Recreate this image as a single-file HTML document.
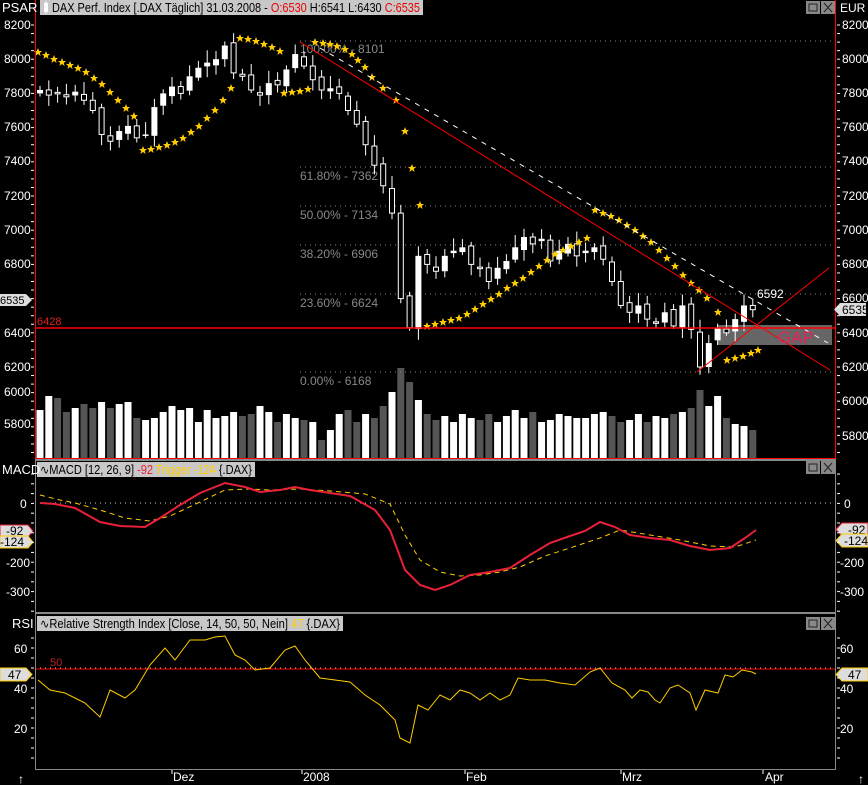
<!DOCTYPE html>
<html><head><meta charset="utf-8"><style>
html,body{margin:0;padding:0;background:#000;}
svg{display:block;font-family:"Liberation Sans",sans-serif;}
</style></head><body>
<svg id="s" width="868" height="785" viewBox="0 0 868 785" xmlns="http://www.w3.org/2000/svg">
<rect width="868" height="785" fill="#000"/>
<g id="vol"></g>
<g stroke="#888" stroke-dasharray="1,4" stroke-width="1">
<line x1="300" y1="41" x2="835" y2="41"/>
<line x1="300" y1="167" x2="835" y2="167"/>
<line x1="300" y1="206" x2="835" y2="206"/>
<line x1="300" y1="245" x2="835" y2="245"/>
<line x1="300" y1="294" x2="835" y2="294"/>
<line x1="300" y1="372" x2="835" y2="372"/>
<line x1="40" y1="668" x2="835" y2="668" stroke="#ccc"/>
<line x1="40" y1="503" x2="835" y2="503" stroke="#ccc"/>
</g>
<g fill="#888" font-size="12">
<text x="300" y="53">100.00% - 8101</text>
<text x="300" y="180">61.80% - 7362</text>
<text x="300" y="219">50.00% - 7134</text>
<text x="300" y="258">38.20% - 6906</text>
<text x="300" y="307">23.60% - 6624</text>
<text x="300" y="385">0.00% - 6168</text>
</g>
<rect x="718" y="325" width="114" height="20" fill="#666"/>
<g id="cdl"></g>
<g id="stars" fill="#ffcc00"></g>
<line x1="35" y1="328" x2="835" y2="328" stroke="#f00" stroke-width="1.5"/>
<text x="37" y="325" fill="#e02020" font-size="11">6428</text>
<line x1="300" y1="42" x2="830" y2="370" stroke="#f00" stroke-width="1"/>
<line x1="697" y1="372" x2="829" y2="268" stroke="#f00" stroke-width="1"/>
<line x1="320" y1="48" x2="828" y2="343" stroke="#fff" stroke-dasharray="5,6" stroke-width="1"/>
<text x="778" y="343" fill="#e8205a" font-size="17">GAP</text>
<text x="757" y="298" fill="#fff" font-size="12">6592</text>
<line x1="35.5" y1="0" x2="35.5" y2="458" stroke="#f00"/>
<line x1="835.5" y1="0" x2="835.5" y2="458" stroke="#f00"/>
<line x1="35" y1="458.5" x2="836" y2="458.5" stroke="#f00"/>
<rect x="35" y="459" width="801" height="2" fill="#888"/>
<rect x="35" y="612" width="801" height="2" fill="#888"/>
<rect x="35" y="769" width="801" height="1" fill="#888"/>
<line x1="35.5" y1="461" x2="35.5" y2="770" stroke="#888"/>
<line x1="835.5" y1="461" x2="835.5" y2="770" stroke="#888"/>
<polyline fill="none" stroke="#ffcc00" stroke-width="1" stroke-dasharray="5,4" points="40,495 60,500 75,503 100,510 125,518 150,521 170,516 200,502 225,490 250,489 270,490 300,489 330,491 365,494 390,504 405,535 420,560 440,572 460,576 480,575 500,572 520,567 545,556 570,548 600,538 620,530 650,535 680,540 710,546 735,547 756,540"/>
<polyline fill="none" stroke="#e8203a" stroke-width="2" points="40,503 55,504 75,508 100,522 120,526 145,527 160,518 180,505 200,493 225,483 245,487 260,492 280,490 295,487 310,490 330,493 350,496 375,510 390,530 405,570 420,585 435,590 450,585 470,575 490,572 510,568 530,555 550,543 570,536 585,531 600,522 615,527 630,535 650,538 670,540 690,546 710,550 730,548 745,538 756,530"/>
<line x1="36" y1="669" x2="835" y2="669" stroke="#f00"/>
<text x="50" y="666" fill="#c02020" font-size="11">50</text>
<polyline fill="none" stroke="#ffcc00" stroke-width="1" points="38,680 50,690 65,693 85,703 100,717 110,690 125,698 135,690 150,665 165,648 175,660 190,640 205,640 215,637 225,636 235,655 245,660 255,670 270,668 285,650 295,646 305,660 320,678 335,680 350,682 365,695 380,705 395,720 400,738 410,743 418,705 428,710 440,695 450,700 460,690 470,693 480,700 490,693 500,700 510,695 518,678 530,680 545,680 560,683 575,685 590,672 600,668 612,683 625,690 632,698 640,690 648,692 655,700 660,703 670,688 678,685 690,693 696,710 705,690 718,693 725,675 733,677 742,670 752,672 756,674"/>
<rect x="40" y="0" width="383" height="15" fill="#c8c8c8"/>
<rect x="44" y="3" width="4" height="9" fill="#fff"/><line x1="46" y1="1" x2="46" y2="14" stroke="#fff"/>
<text x="52" y="12" font-size="12.5" fill="#000" textLength="368" lengthAdjust="spacingAndGlyphs">DAX Perf. Index [.DAX  Täglich] 31.03.2008 - <tspan fill="#e00">O:6530</tspan> H:6541 L:6430 <tspan fill="#e00">C:6535</tspan></text>
<text x="2" y="12" fill="#fff" font-size="13">PSAR</text>
<rect x="37" y="462" width="218" height="15" fill="#c8c8c8"/>
<text x="40" y="474" font-size="12.5" fill="#000" textLength="212" lengthAdjust="spacingAndGlyphs">∿MACD [12, 26, 9] <tspan fill="#e8203a">-92</tspan> <tspan fill="#ffcc00">Trigger -124</tspan> {.DAX}</text>
<text x="2" y="474" fill="#fff" font-size="13">MACD</text>
<rect x="37" y="616" width="306" height="15" fill="#c8c8c8"/>
<text x="40" y="628" font-size="12.5" fill="#000" textLength="300" lengthAdjust="spacingAndGlyphs">∿Relative Strength Index [Close, 14, 50, 50, Nein] <tspan fill="#ffcc00">47</tspan> {.DAX}</text>
<text x="12" y="628" fill="#fff" font-size="13">RSI</text>
<g id="btns"></g>
<g fill="#fff" font-size="12">
<text x="840" y="12">EUR</text>
<text x="842" y="29">8200</text><text x="842" y="63">8000</text><text x="842" y="97">7800</text>
<text x="842" y="131">7600</text><text x="842" y="165">7400</text><text x="842" y="200">7200</text>
<text x="842" y="234">7000</text><text x="842" y="268">6800</text><text x="842" y="302">6600</text>
<text x="842" y="337">6400</text><text x="842" y="371">6200</text>
<text x="842" y="405">6000</text><text x="842" y="440">5800</text>
<text x="4" y="29">8200</text><text x="4" y="63">8000</text><text x="4" y="97">7800</text>
<text x="4" y="131">7600</text><text x="4" y="165">7400</text><text x="4" y="200">7200</text>
<text x="4" y="234">7000</text><text x="4" y="268">6800</text><text x="4" y="337">6400</text><text x="4" y="371">6200</text>
<text x="4" y="396">6000</text><text x="4" y="428">5800</text>
<text x="844" y="508">0</text><text x="840" y="567">-200</text><text x="840" y="596">-300</text>
<text x="20" y="508">0</text><text x="6" y="567">-200</text><text x="6" y="596">-300</text>
<text x="840" y="653">60</text><text x="840" y="733">20</text>
<text x="14" y="653">60</text><text x="14" y="693">40</text><text x="14" y="733">20</text>
<text x="840" y="693">40</text>
</g>
<path d="M840,303 L866,303 L866,316 L840,316 L834,309.5 Z" fill="#ddd"/>
<text x="842" y="314" font-size="12" fill="#000">6535</text>
<path d="M0,294 L26,294 L32,300 L26,306 L0,306Z" fill="#ddd"/>
<text x="0" y="304" font-size="11" fill="#000">6535</text>
<path d="M842,523 L868,523 L868,536 L842,536 L836,529.5 Z" fill="#ddd" stroke="#e8203a"/>
<text x="848" y="534" font-size="12" fill="#000">-92</text>
<path d="M842,534 L868,534 L868,547 L842,547 L836,540.5 Z" fill="#ddd" stroke="#ffcc00"/>
<text x="844" y="545" font-size="12" fill="#000">-124</text>
<path d="M0,525 L28,525 L33,531 L28,537 L0,537Z" fill="#ddd" stroke="#e8203a"/>
<text x="6" y="535" font-size="12" fill="#000">-92</text>
<path d="M0,536 L28,536 L33,542 L28,548 L0,548Z" fill="#ddd" stroke="#ffcc00"/>
<text x="0" y="546" font-size="12" fill="#000">-124</text>
<path d="M842,668 L868,668 L868,681 L842,681 L836,674.5 Z" fill="#ddd" stroke="#ffcc00"/>
<text x="848" y="679" font-size="12" fill="#000">47</text>
<path d="M0,668 L26,668 L32,674.5 L26,681 L0,681Z" fill="#ddd" stroke="#ffcc00"/>
<text x="8" y="679" font-size="12" fill="#000">47</text>
<g fill="#fff" font-size="12">
<text x="173" y="781">Dez</text><text x="303" y="781">2008</text><text x="466" y="781">Feb</text>
<text x="622" y="781">Mrz</text><text x="765" y="781">Apr</text>
<text x="18" y="783">↑</text><text x="858" y="783">↑</text>
</g>
<g stroke="#fff"><line x1="172" y1="770" x2="172" y2="774"/><line x1="302" y1="770" x2="302" y2="774"/><line x1="465" y1="770" x2="465" y2="774"/><line x1="621" y1="770" x2="621" y2="774"/><line x1="763" y1="770" x2="763" y2="774"/></g>
<g id="ticks" stroke="#fff"></g>
</svg>
<script>
var NS="http://www.w3.org/2000/svg";
function el(p,t,a){var e=document.createElementNS(NS,t);for(var k in a)e.setAttribute(k,a[k]);document.getElementById(p).appendChild(e);return e;}
function Y(p){return 25+(8200-p)/200*34.2;}
var c=[7820,7790,7800,7780,7810,7760,7700,7560,7520,7580,7610,7540,7560,7720,7800,7840,7800,7900,7950,7980,8000,8080,7920,7900,7820,7790,7860,7850,7940,8030,7960,7880,7820,7830,7800,7700,7620,7500,7380,7260,7100,6600,6430,6850,6800,6760,6850,6880,6900,6800,6780,6700,6780,6820,6900,6960,6920,6950,6820,6880,6920,6850,6880,6900,6830,6700,6560,6520,6560,6480,6460,6520,6440,6560,6420,6200,6340,6430,6400,6480,6560,6535];
var vol=[48,62,60,46,50,54,50,56,50,54,56,40,38,40,46,52,48,50,36,48,40,42,46,42,44,52,46,36,44,40,38,36,18,28,44,48,36,44,40,52,66,90,76,58,44,38,42,36,44,40,38,44,36,42,48,40,46,36,38,44,42,40,40,44,46,42,36,38,44,36,42,40,44,46,50,68,52,62,40,34,32,28];
for(var i=0;i<c.length;i++){
 var x=40+i*8.8, cl=c[i], op=i?c[i-1]+((i*37)%5-2)*8:7800;
 var r=(i*53%7)+3, hi=Math.max(op,cl)+r*8, lo=Math.min(op,cl)-((i*29%6)+2)*9;
 el("cdl","line",{x1:x,y1:Y(hi),x2:x,y2:Y(lo),stroke:"#fff"});
 var t=Math.min(Y(op),Y(cl)),h=Math.max(1.5,Math.abs(Y(op)-Y(cl)));
 if(cl>=op) el("cdl","rect",{x:x-3,y:t,width:6,height:h,fill:"#fff"});
 else el("cdl","rect",{x:x-2.5,y:t,width:5,height:h,fill:"#000",stroke:"#fff"});
 var v=vol[i]||40;
 el("vol","rect",{x:x-3.5,y:458-v,width:7,height:v,fill:(i%3==1?"#fff":(cl>=op?"#fff":"#555"))});
}
var st=[[38,52],[46,55],[54,59],[62,62],[70,65],[78,68],[86,72],[94,78],[102,84],[110,92],[118,100],[126,108],[134,116],[143,150],[151,149],[159,147],[167,145],[175,142],[183,138],[191,132],[199,126],[207,118],[215,110],[223,100],[231,88],[240,38],[248,39],[256,41],[264,44],[272,47],[280,51],[284,93],[292,92],[300,91],[308,89],[315,42],[323,43],[330,44],[337,46],[345,49],[352,54],[358,60],[365,67],[372,77],[383,88],[396,100],[405,131],[412,168],[420,205],[427,326],[435,324],[443,322],[451,320],[459,318],[467,314],[475,309],[483,304],[491,299],[499,294],[507,288],[515,283],[523,278],[531,272],[539,266],[547,260],[555,254],[563,250],[571,246],[579,242],[587,238],[595,210],[603,213],[611,216],[619,220],[627,225],[635,230],[643,236],[651,242],[659,250],[667,258],[675,266],[683,275],[691,283],[699,290],[707,298],[718,312],[727,360],[735,358],[743,356],[751,353],[758,350]];
st.forEach(function(p){var x=p[0],y=p[1];
 el("stars","path",{d:"M"+x+","+(y-4)+"L"+(x+1.2)+","+(y-1)+"L"+(x+4)+","+(y-1)+"L"+(x+1.8)+","+(y+1)+"L"+(x+2.6)+","+(y+4)+"L"+x+","+(y+2)+"L"+(x-2.6)+","+(y+4)+"L"+(x-1.8)+","+(y+1)+"L"+(x-4)+","+(y-1)+"L"+(x-1.2)+","+(y-1)+"Z"});});
[[1],[461],[617]].forEach(function(a){var y=a[0];
 el("btns","rect",{x:806,y:y,width:14,height:13,fill:"#888"});
 el("btns","rect",{x:809,y:y+3,width:8,height:7,fill:"none",stroke:"#222"});
 el("btns","rect",{x:821,y:y,width:14,height:13,fill:"#888"});
 el("btns","path",{d:"M824,"+(y+2)+"L832,"+(y+11)+"M832,"+(y+2)+"L824,"+(y+11),stroke:"#222"});});
for(var y=25;y<458;y+=8.55){el("ticks","line",{x1:837,y1:y,x2:840,y2:y});el("ticks","line",{x1:31,y1:y,x2:34,y2:y});}
for(var y=474;y<612;y+=9.8){el("ticks","line",{x1:837,y1:y,x2:840,y2:y});el("ticks","line",{x1:31,y1:y,x2:34,y2:y});}
for(var y=638;y<768;y+=10){el("ticks","line",{x1:837,y1:y,x2:840,y2:y});el("ticks","line",{x1:31,y1:y,x2:34,y2:y});}
</script>
</body></html>
